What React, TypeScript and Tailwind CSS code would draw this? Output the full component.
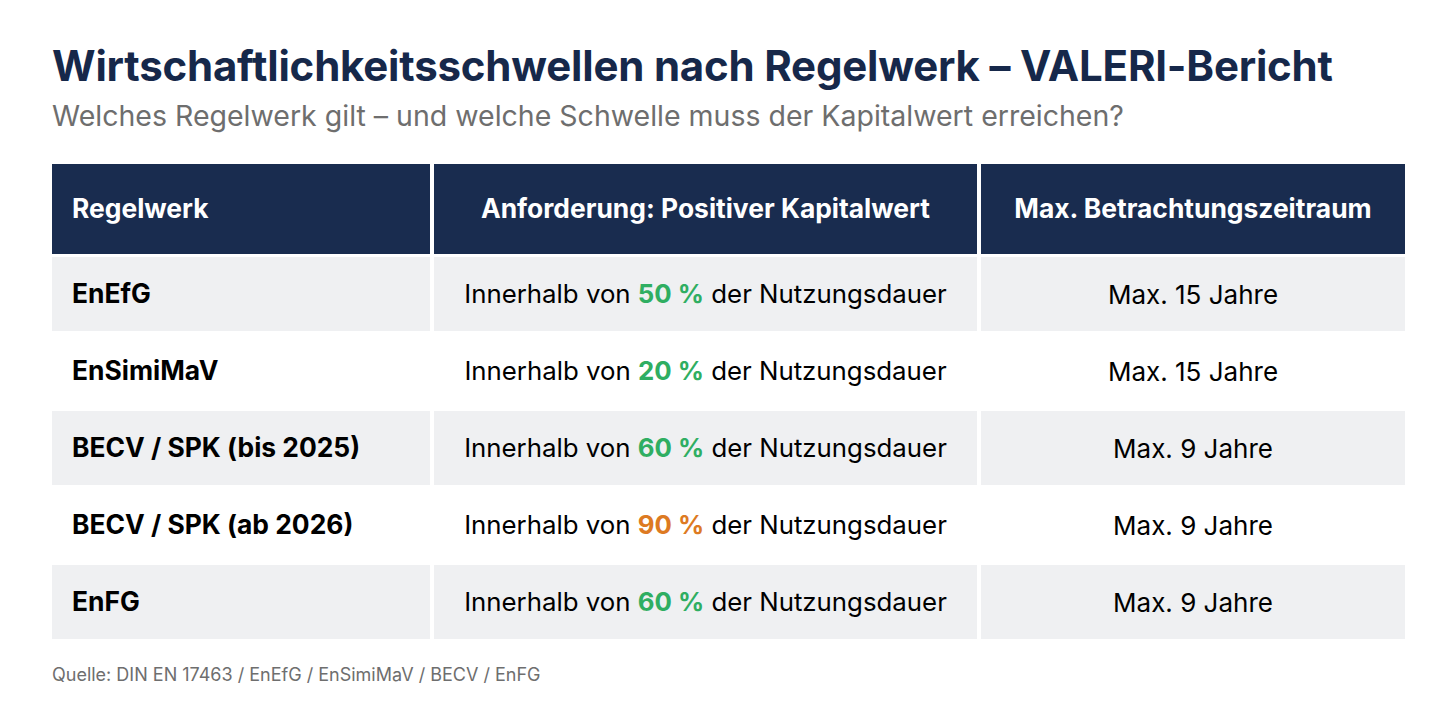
import React from "react";

const rows = [
  { name: "EnEfG", pct: "50 %", color: "text-[#2fae62]", max: "Max. 15 Jahre", shade: true },
  { name: "EnSimiMaV", pct: "20 %", color: "text-[#2fae62]", max: "Max. 15 Jahre", shade: false },
  { name: "BECV / SPK (bis 2025)", pct: "60 %", color: "text-[#2fae62]", max: "Max. 9 Jahre", shade: true },
  { name: "BECV / SPK (ab 2026)", pct: "90 %", color: "text-[#dd7a22]", max: "Max. 9 Jahre", shade: false },
  { name: "EnFG", pct: "60 %", color: "text-[#2fae62]", max: "Max. 9 Jahre", shade: true },
];

export default function App() {
  return (
    <div className="w-[1456px] h-[720px] bg-white px-[52px] pt-[40px] font-['Inter',sans-serif] text-black">
      <h1 className="text-[42px] leading-[52px] font-bold text-[#16284a] tracking-[-0.2px]">
        Wirtschaftlichkeitsschwellen nach Regelwerk – VALERI-Bericht
      </h1>
      <p className="text-[28.5px] leading-[36px] text-[#6e6e6e] mt-[6px]">
        Welches Regelwerk gilt – und welche Schwelle muss der Kapitalwert erreichen?
      </p>
      <div className="mt-[30px] grid grid-cols-[378px_543px_424px] gap-x-[4px] gap-y-[3px]">
        <div className="h-[90px] bg-[#192c4f] flex items-center px-[20px] text-white font-bold text-[26.4px]">Regelwerk</div>
        <div className="h-[90px] bg-[#192c4f] flex items-center justify-center text-white font-bold text-[26.4px]">Anforderung: Positiver Kapitalwert</div>
        <div className="h-[90px] bg-[#192c4f] flex items-center justify-center text-white font-bold text-[26.4px]">Max. Betrachtungszeitraum</div>
        {rows.map((r) => (
          <React.Fragment key={r.name + r.pct}>
            <div className={`h-[74px] flex items-center px-[20px] font-bold text-[26.4px] ${r.shade ? "bg-[#eff0f2]" : "bg-white"}`}>{r.name}</div>
            <div className={`h-[74px] flex items-center justify-center text-[25.8px] ${r.shade ? "bg-[#eff0f2]" : "bg-white"}`}>
              <span>
                Innerhalb von <span className={`font-bold ${r.color}`}>{r.pct}</span> der Nutzungsdauer
              </span>
            </div>
            <div className={`h-[74px] flex items-center justify-center text-[26px] ${r.shade ? "bg-[#eff0f2]" : "bg-white"}`}>{r.max}</div>
          </React.Fragment>
        ))}
      </div>
      <p className="mt-[22px] text-[18px] text-[#6e6e6e]">Quelle: DIN EN 17463 / EnEfG / EnSimiMaV / BECV / EnFG</p>
    </div>
  );
}
